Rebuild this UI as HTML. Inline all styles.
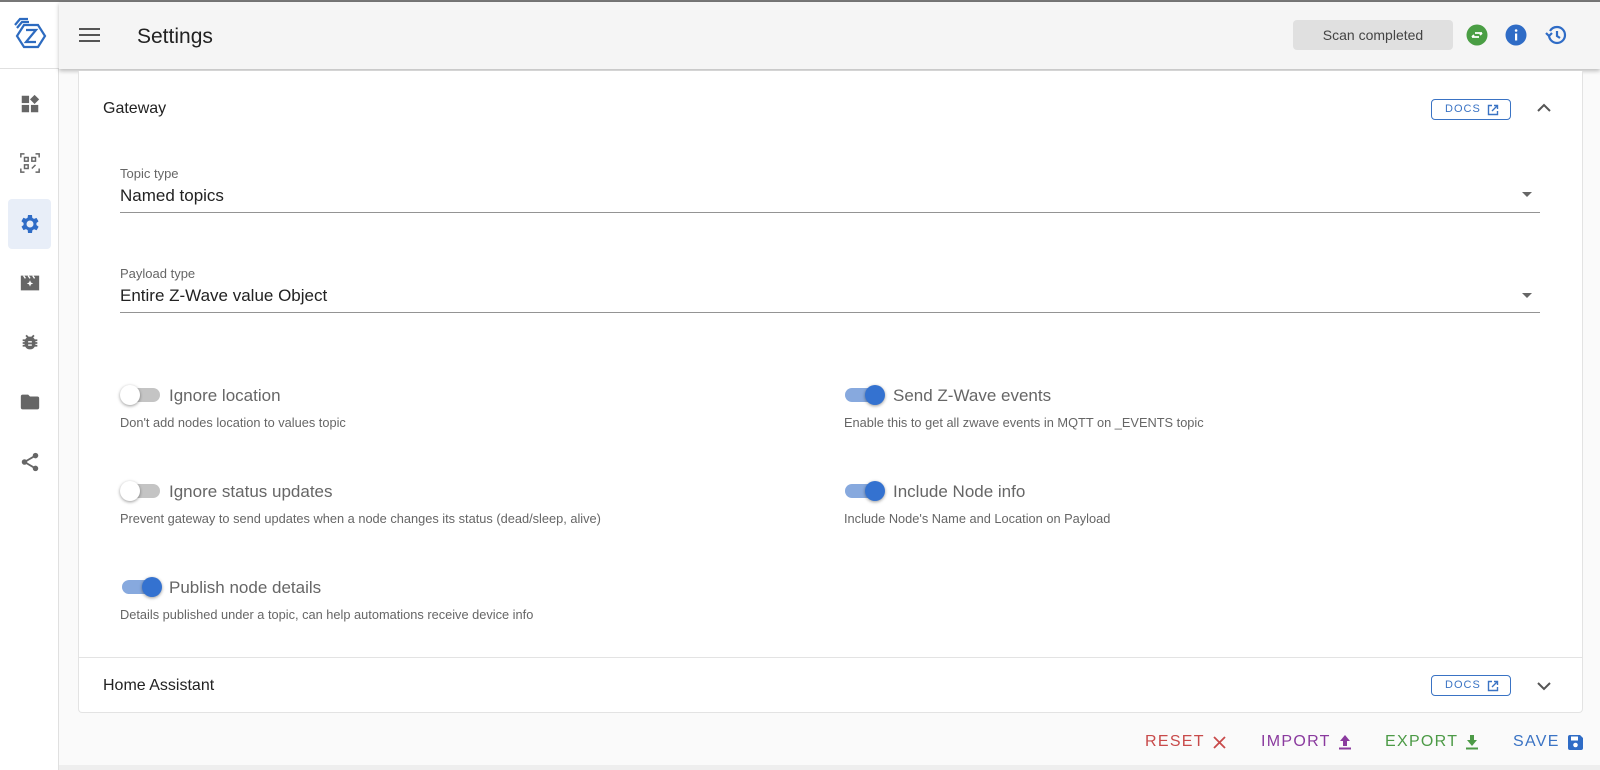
<!DOCTYPE html>
<html><head><meta charset="utf-8"><style>
*{box-sizing:border-box;margin:0;padding:0}
body{width:1600px;height:770px;overflow:hidden;background:#fafafa;font-family:"Liberation Sans",sans-serif;color:#222;position:relative}
.abs{position:absolute}
#top{position:absolute;left:0;top:0;width:1600px;height:2px;background:#777}
#side{position:absolute;left:0;top:2px;width:59px;height:768px;background:#fff;border-right:1px solid #e0e0e0}
#head{position:absolute;left:59px;top:2px;width:1541px;height:67px;background:#f5f5f5;box-shadow:0 2px 4px rgba(0,0,0,.25)}
#logo{position:absolute;left:0;top:2px;width:59px;height:67px;border-bottom:1px solid #e0e0e0;background:#fff}
.card{position:absolute;left:78px;top:71px;width:1505px;height:642px;background:#fff;border:1px solid #e3e3e3;border-top:none;border-radius:0 0 4px 4px}
.t{position:absolute;white-space:nowrap}
.docs{position:absolute;width:80px;height:21px;border:1px solid #3a73c4;border-radius:4px;color:#3a73c4;font-size:11px;letter-spacing:1px;line-height:19px;padding-left:13px}
.sw{position:absolute;width:42px;height:24px}
.sw .tr{position:absolute;left:2px;top:5px;width:38px;height:14px;border-radius:7px;background:#c4c4c4}
.sw .k{position:absolute;top:2px;width:20px;height:20px;border-radius:50%;background:#fff;box-shadow:0 1px 3px rgba(0,0,0,.4)}
.sw.on .tr{background:#87a9de}
.sw.on .k{background:#3472d0;left:22px}
.sw.off .k{left:0}
.lbl{font-size:17px;color:#666}
.desc{font-size:12.8px;color:#666}
.fl{font-size:13px;color:#666}
.fv{font-size:17px;color:#222}
.line{position:absolute;left:120px;width:1420px;height:1px;background:#949494}
.arr{position:absolute;width:0;height:0;border-left:5px solid transparent;border-right:5px solid transparent;border-top:5px solid #666}
.btn{position:absolute;top:733px;font-size:16px;letter-spacing:1.3px}
</style></head><body>
<div id="top"></div>
<div id="side"></div>
<div id="logo">
<svg class="abs" style="left:12px;top:10px" width="38" height="40" viewBox="0 0 38 40" fill="none" stroke="#2d6bc0" stroke-width="2.2">
<path d="M3 13 L8 7 L16 7"/><path d="M5 16 L10 10 L17 10"/>
<path d="M12 13 L26 13 L33 24 L26 35 L12 35 L5 24 Z"/>
<path d="M14 18 L24 18 L14 30 L24 30"/></svg>
</div>
<div class="abs" style="left:8px;top:199px;width:43px;height:50px;background:#e8eef8;border-radius:4px"></div>
<svg class="abs" style="left:19px;top:93px" width="22" height="22" viewBox="0 0 24 24" fill="#666"><rect x="3" y="3" width="8" height="8"/><rect x="3" y="13" width="8" height="8"/><rect x="13" y="13" width="8" height="8"/><path d="M17 2l5 5-5 5-5-5z"/></svg>
<svg class="abs" style="left:19px;top:152px" width="22" height="22" viewBox="0 0 24 24" fill="none" stroke="#666" stroke-width="1.6"><path d="M2 6V2h4M18 2h4v4M22 18v4h-4M6 22H2v-4"/><rect x="6" y="6" width="4" height="4"/><rect x="14" y="6" width="4" height="4"/><rect x="6" y="14" width="4" height="4"/><path d="M14 18l4-4"/></svg>
<svg class="abs" style="left:18px;top:212px" width="24" height="24" viewBox="0 0 24 24" fill="#2f6cc6"><path d="M19.4 13a7.5 7.5 0 000-2l2.1-1.6-2-3.5-2.5 1a7 7 0 00-1.7-1L15 3h-4l-.4 2.7a7 7 0 00-1.7 1l-2.5-1-2 3.5L6.6 11a7.5 7.5 0 000 2l-2.1 1.6 2 3.5 2.5-1a7 7 0 001.7 1L11 21h4l.4-2.7a7 7 0 001.7-1l2.5 1 2-3.5zM13 15.5A3.5 3.5 0 1113 8.5a3.5 3.5 0 010 7z" transform="translate(-1 0)"/></svg>
<svg class="abs" style="left:19px;top:272px" width="22" height="22" viewBox="0 0 24 24" fill="#666"><path d="M2 4h20v16H2z"/><path d="M12 9l1 2.5 2.5 1-2.5 1-1 2.5-1-2.5-2.5-1 2.5-1z" fill="#fff"/><path d="M5 4l2 3M10 4l2 3M15 4l2 3" stroke="#fff" stroke-width="1.5"/></svg>
<svg class="abs" style="left:19px;top:332px" width="22" height="22" viewBox="0 0 24 24" fill="#666"><path d="M20 8h-2.8a6 6 0 00-1.8-2l1.6-1.6L15.6 3l-2.2 2.2a6 6 0 00-2.8 0L8.4 3 7 4.4 8.6 6a6 6 0 00-1.8 2H4v2h2.1v1H4v2h2.1v1H4v2h2.8a6 6 0 0010.4 0H20v-2h-2.1v-1H20v-2h-2.1v-1H20z"/><path d="M10 10h4v1.5h-4zM10 13.5h4V15h-4z" fill="#fff"/></svg>
<svg class="abs" style="left:19px;top:391px" width="22" height="22" viewBox="0 0 24 24" fill="#666"><path d="M10 4H4a2 2 0 00-2 2v12a2 2 0 002 2h16a2 2 0 002-2V8a2 2 0 00-2-2h-8z"/></svg>
<svg class="abs" style="left:19px;top:451px" width="22" height="22" viewBox="0 0 24 24" fill="#666"><circle cx="18" cy="5" r="3"/><circle cx="6" cy="12" r="3"/><circle cx="18" cy="19" r="3"/><path d="M6 12L18 5M6 12l12 7" stroke="#666" stroke-width="2"/></svg>
<div id="head"></div>
<svg class="abs" style="left:79px;top:25px" width="22" height="20" viewBox="0 0 22 20" fill="#555"><rect x="0" y="3" width="21" height="2"/><rect x="0" y="9" width="21" height="2"/><rect x="0" y="15" width="21" height="2"/></svg>
<div class="t" style="left:137px;top:25px;font-size:21px;color:#222">Settings</div>
<div class="abs" style="left:1293px;top:20px;width:160px;height:30px;background:#e0e0e0;border-radius:4px;font-size:14px;color:#444;text-align:center;line-height:30px">Scan completed</div>
<svg class="abs" style="left:1466px;top:24px" width="22" height="22" viewBox="0 0 22 22"><circle cx="11" cy="11" r="10.5" fill="#4a9e44"/><path d="M6 13h7M6 13l2-2M16 9H9M16 9l-2 2" stroke="#fff" stroke-width="1.8" fill="none"/></svg>
<svg class="abs" style="left:1505px;top:24px" width="22" height="22" viewBox="0 0 22 22"><circle cx="11" cy="11" r="10.5" fill="#2f6cc6"/><rect x="10" y="9.5" width="2.2" height="7" fill="#fff"/><circle cx="11.1" cy="6.5" r="1.3" fill="#fff"/></svg>
<svg class="abs" style="left:1544px;top:23px" width="24" height="24" viewBox="0 0 24 24" fill="none" stroke="#2f6cc6" stroke-width="2.2"><path d="M5 12a8 8 0 108-8 8 8 0 00-7 4"/><path d="M2 10l3 3 3-3"/><path d="M13 8v5l3 2"/></svg>
<div class="card"></div>
<div class="t" style="left:103px;top:100px;font-size:16px">Gateway</div>
<div class="docs" style="left:1431px;top:99px">DOCS<svg class="abs" style="left:55px;top:4px" width="12" height="12" viewBox="0 0 12 12" fill="none" stroke="#3a73c4" stroke-width="1.4"><path d="M5 1.5H1.5v9h9V7M7 1.5h3.5V5M10.5 1.5L5 7"/></svg></div>
<svg class="abs" style="left:1537px;top:103px" width="14" height="10" viewBox="0 0 14 10" fill="none" stroke="#555" stroke-width="2"><path d="M1 8l6-6 6 6"/></svg>
<div class="t fl" style="left:120px;top:166px">Topic type</div>
<div class="t fv" style="left:120px;top:186px">Named topics</div>
<div class="arr" style="left:1522px;top:192px"></div>
<div class="line" style="top:212px"></div>
<div class="t fl" style="left:120px;top:266px">Payload type</div>
<div class="t fv" style="left:120px;top:286px">Entire Z-Wave value Object</div>
<div class="arr" style="left:1522px;top:293px"></div>
<div class="line" style="top:312px"></div>

<div class="sw off" style="left:120px;top:383px"><div class="tr"></div><div class="k"></div></div>
<div class="t lbl" style="left:169px;top:386px">Ignore location</div>
<div class="t desc" style="left:120px;top:415px">Don't add nodes location to values topic</div>
<div class="sw on" style="left:843px;top:383px"><div class="tr"></div><div class="k"></div></div>
<div class="t lbl" style="left:893px;top:386px">Send Z-Wave events</div>
<div class="t desc" style="left:844px;top:415px">Enable this to get all zwave events in MQTT on _EVENTS topic</div>

<div class="sw off" style="left:120px;top:479px"><div class="tr"></div><div class="k"></div></div>
<div class="t lbl" style="left:169px;top:482px">Ignore status updates</div>
<div class="t desc" style="left:120px;top:511px">Prevent gateway to send updates when a node changes its status (dead/sleep, alive)</div>
<div class="sw on" style="left:843px;top:479px"><div class="tr"></div><div class="k"></div></div>
<div class="t lbl" style="left:893px;top:482px">Include Node info</div>
<div class="t desc" style="left:844px;top:511px">Include Node's Name and Location on Payload</div>

<div class="sw on" style="left:120px;top:575px"><div class="tr"></div><div class="k"></div></div>
<div class="t lbl" style="left:169px;top:578px">Publish node details</div>
<div class="t desc" style="left:120px;top:607px">Details published under a topic, can help automations receive device info</div>

<div class="abs" style="left:78px;top:657px;width:1505px;height:1px;background:#e3e3e3"></div>
<div class="t" style="left:103px;top:677px;font-size:16px">Home Assistant</div>
<div class="docs" style="left:1431px;top:675px">DOCS<svg class="abs" style="left:55px;top:4px" width="12" height="12" viewBox="0 0 12 12" fill="none" stroke="#3a73c4" stroke-width="1.4"><path d="M5 1.5H1.5v9h9V7M7 1.5h3.5V5M10.5 1.5L5 7"/></svg></div>
<svg class="abs" style="left:1537px;top:681px" width="14" height="10" viewBox="0 0 14 10" fill="none" stroke="#555" stroke-width="2"><path d="M1 2l6 6 6-6"/></svg>

<div class="btn" style="left:1145px;color:#c84a4a">RESET</div>
<svg class="abs" style="left:1213px;top:736px" width="13" height="13" viewBox="0 0 13 13" stroke="#c84a4a" stroke-width="1.8"><path d="M1 1l11 11M12 1L1 12"/></svg>
<div class="btn" style="left:1261px;color:#8a3a9e">IMPORT</div>
<svg class="abs" style="left:1338px;top:734px" width="14" height="16" viewBox="0 0 14 16" fill="#8a3a9e"><path d="M7 1l5 6H9v5H5V7H2z"/><rect x="1" y="13.5" width="12" height="2"/></svg>
<div class="btn" style="left:1385px;color:#4c9a46">EXPORT</div>
<svg class="abs" style="left:1465px;top:734px" width="14" height="16" viewBox="0 0 14 16" fill="#4c9a46"><path d="M5 1h4v5h3l-5 6-5-6h3z"/><rect x="1" y="13.5" width="12" height="2"/></svg>
<div class="btn" style="left:1513px;color:#3a73c4">SAVE</div>
<svg class="abs" style="left:1567px;top:734px" width="17" height="17" viewBox="0 0 17 17"><path d="M1 3a2 2 0 012-2h10l3 3v10a2 2 0 01-2 2H3a2 2 0 01-2-2z" fill="#2f6cc6"/><rect x="4" y="2.5" width="7" height="4" fill="#fff"/><circle cx="8.5" cy="11" r="2.3" fill="#fff"/></svg>
<div class="abs" style="left:59px;top:765px;width:1541px;height:5px;background:#eee"></div>
</body></html>
